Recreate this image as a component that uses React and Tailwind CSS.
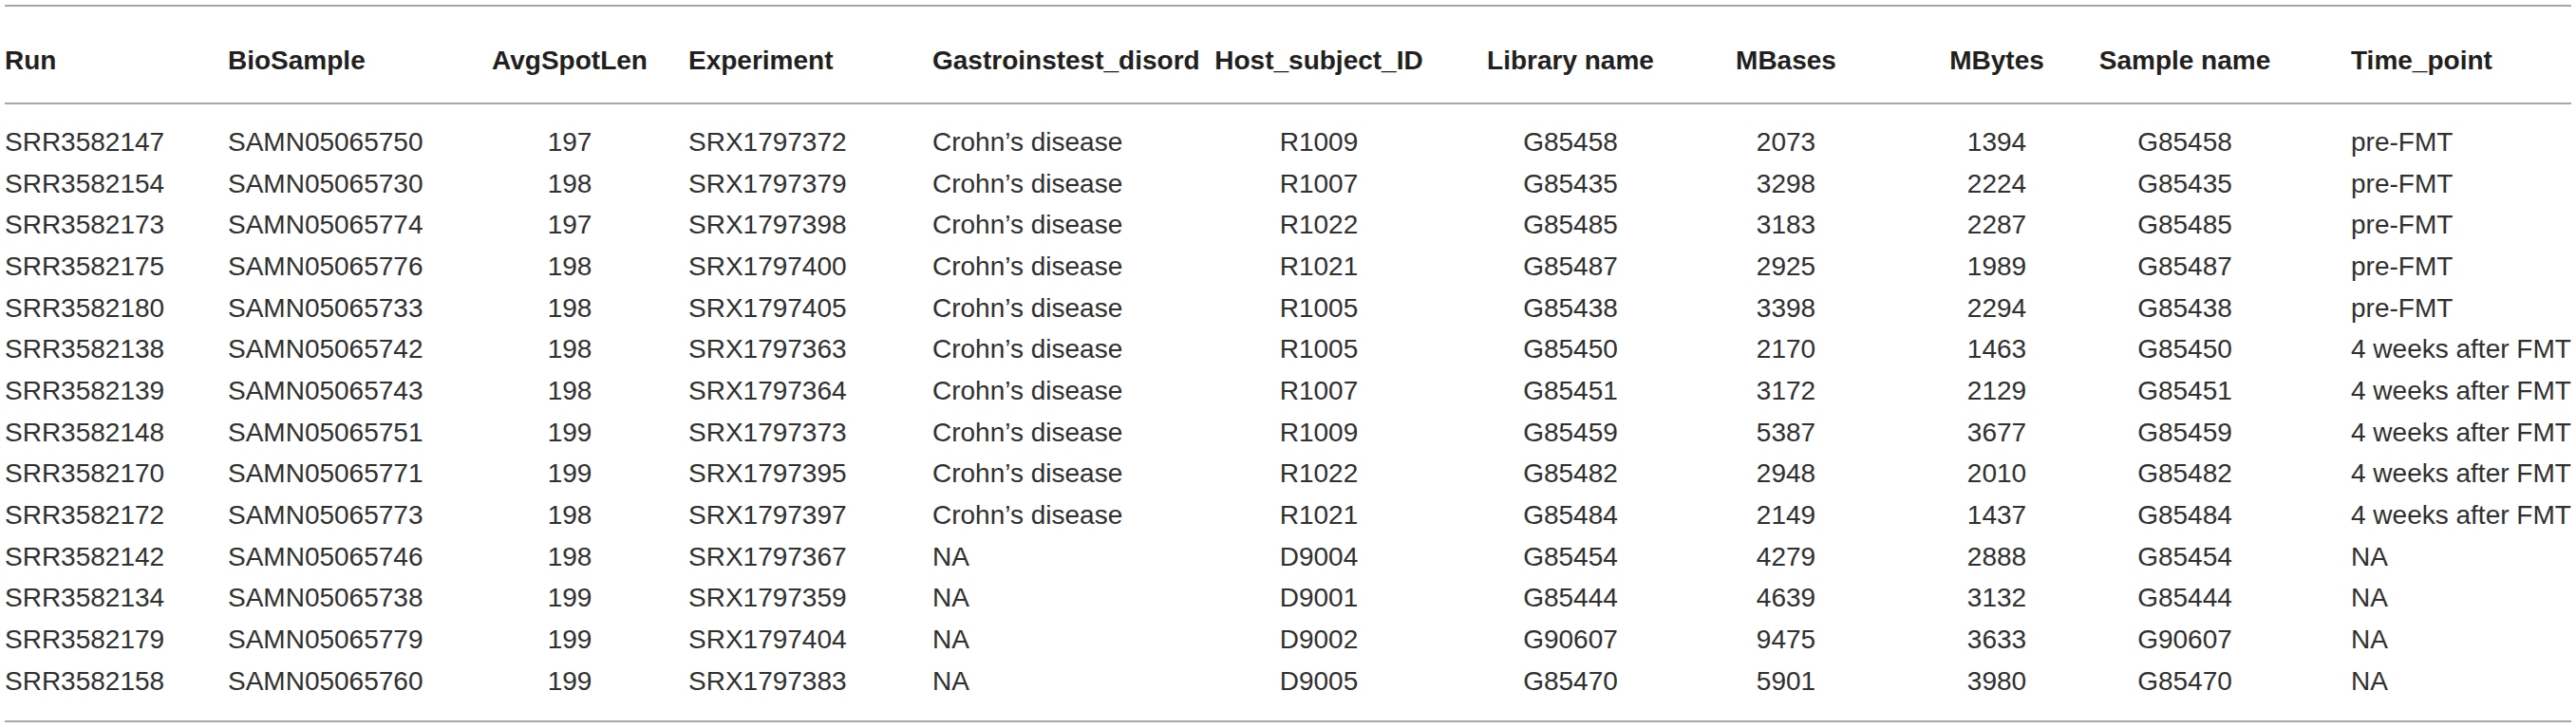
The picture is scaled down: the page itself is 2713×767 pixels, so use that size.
import React from "react";

const headers = [
  "Run",
  "BioSample",
  "AvgSpotLen",
  "Experiment",
  "Gastroinstest_disord",
  "Host_subject_ID",
  "Library name",
  "MBases",
  "MBytes",
  "Sample name",
  "Time_point",
];

const rows = [
  ["SRR3582147", "SAMN05065750", "197", "SRX1797372", "Crohn’s disease", "R1009", "G85458", "2073", "1394", "G85458", "pre-FMT"],
  ["SRR3582154", "SAMN05065730", "198", "SRX1797379", "Crohn’s disease", "R1007", "G85435", "3298", "2224", "G85435", "pre-FMT"],
  ["SRR3582173", "SAMN05065774", "197", "SRX1797398", "Crohn’s disease", "R1022", "G85485", "3183", "2287", "G85485", "pre-FMT"],
  ["SRR3582175", "SAMN05065776", "198", "SRX1797400", "Crohn’s disease", "R1021", "G85487", "2925", "1989", "G85487", "pre-FMT"],
  ["SRR3582180", "SAMN05065733", "198", "SRX1797405", "Crohn’s disease", "R1005", "G85438", "3398", "2294", "G85438", "pre-FMT"],
  ["SRR3582138", "SAMN05065742", "198", "SRX1797363", "Crohn’s disease", "R1005", "G85450", "2170", "1463", "G85450", "4 weeks after FMT"],
  ["SRR3582139", "SAMN05065743", "198", "SRX1797364", "Crohn’s disease", "R1007", "G85451", "3172", "2129", "G85451", "4 weeks after FMT"],
  ["SRR3582148", "SAMN05065751", "199", "SRX1797373", "Crohn’s disease", "R1009", "G85459", "5387", "3677", "G85459", "4 weeks after FMT"],
  ["SRR3582170", "SAMN05065771", "199", "SRX1797395", "Crohn’s disease", "R1022", "G85482", "2948", "2010", "G85482", "4 weeks after FMT"],
  ["SRR3582172", "SAMN05065773", "198", "SRX1797397", "Crohn’s disease", "R1021", "G85484", "2149", "1437", "G85484", "4 weeks after FMT"],
  ["SRR3582142", "SAMN05065746", "198", "SRX1797367", "NA", "D9004", "G85454", "4279", "2888", "G85454", "NA"],
  ["SRR3582134", "SAMN05065738", "199", "SRX1797359", "NA", "D9001", "G85444", "4639", "3132", "G85444", "NA"],
  ["SRR3582179", "SAMN05065779", "199", "SRX1797404", "NA", "D9002", "G90607", "9475", "3633", "G90607", "NA"],
  ["SRR3582158", "SAMN05065760", "199", "SRX1797383", "NA", "D9005", "G85470", "5901", "3980", "G85470", "NA"],
];

const cellClass = [
  "flex justify-start",
  "flex justify-start",
  "flex justify-center",
  "flex justify-start",
  "flex justify-start",
  "flex justify-center",
  "flex justify-center",
  "flex justify-center",
  "flex justify-center",
  "flex justify-center",
  "flex justify-start pl-[105px]",
];

const grid =
  "grid grid-cols-[235px_235px_250px_257px_275px_264px_266px_188px_256px_140px_337px]";

export default function App() {
  return (
    <div className="w-[2713px] h-[767px] bg-white pt-[5px] pl-[5px] font-['Liberation_Sans',Arial,sans-serif] text-[28px]">
      <div className="w-[2703px] border-t-2 border-b-2 border-[#a6a6a6]">
        <div className={`${grid} pt-[41px] pb-[28px] border-b-2 border-[#a6a6a6] font-bold text-[#231f20]`}>
          {headers.map((h, i) => (
            <div key={i} className={`${cellClass[i]} whitespace-nowrap leading-[32px]`}>
              {h}
            </div>
          ))}
        </div>
        <div className="pt-[18px] pb-[19px] text-[#303030]">
          {rows.map((r, ri) => (
            <div key={ri} className={`${grid} h-[43.7px] items-center`}>
              {r.map((c, ci) => (
                <div key={ci} className={`${cellClass[ci]} whitespace-nowrap leading-[32px]`}>
                  {c}
                </div>
              ))}
            </div>
          ))}
        </div>
      </div>
    </div>
  );
}
